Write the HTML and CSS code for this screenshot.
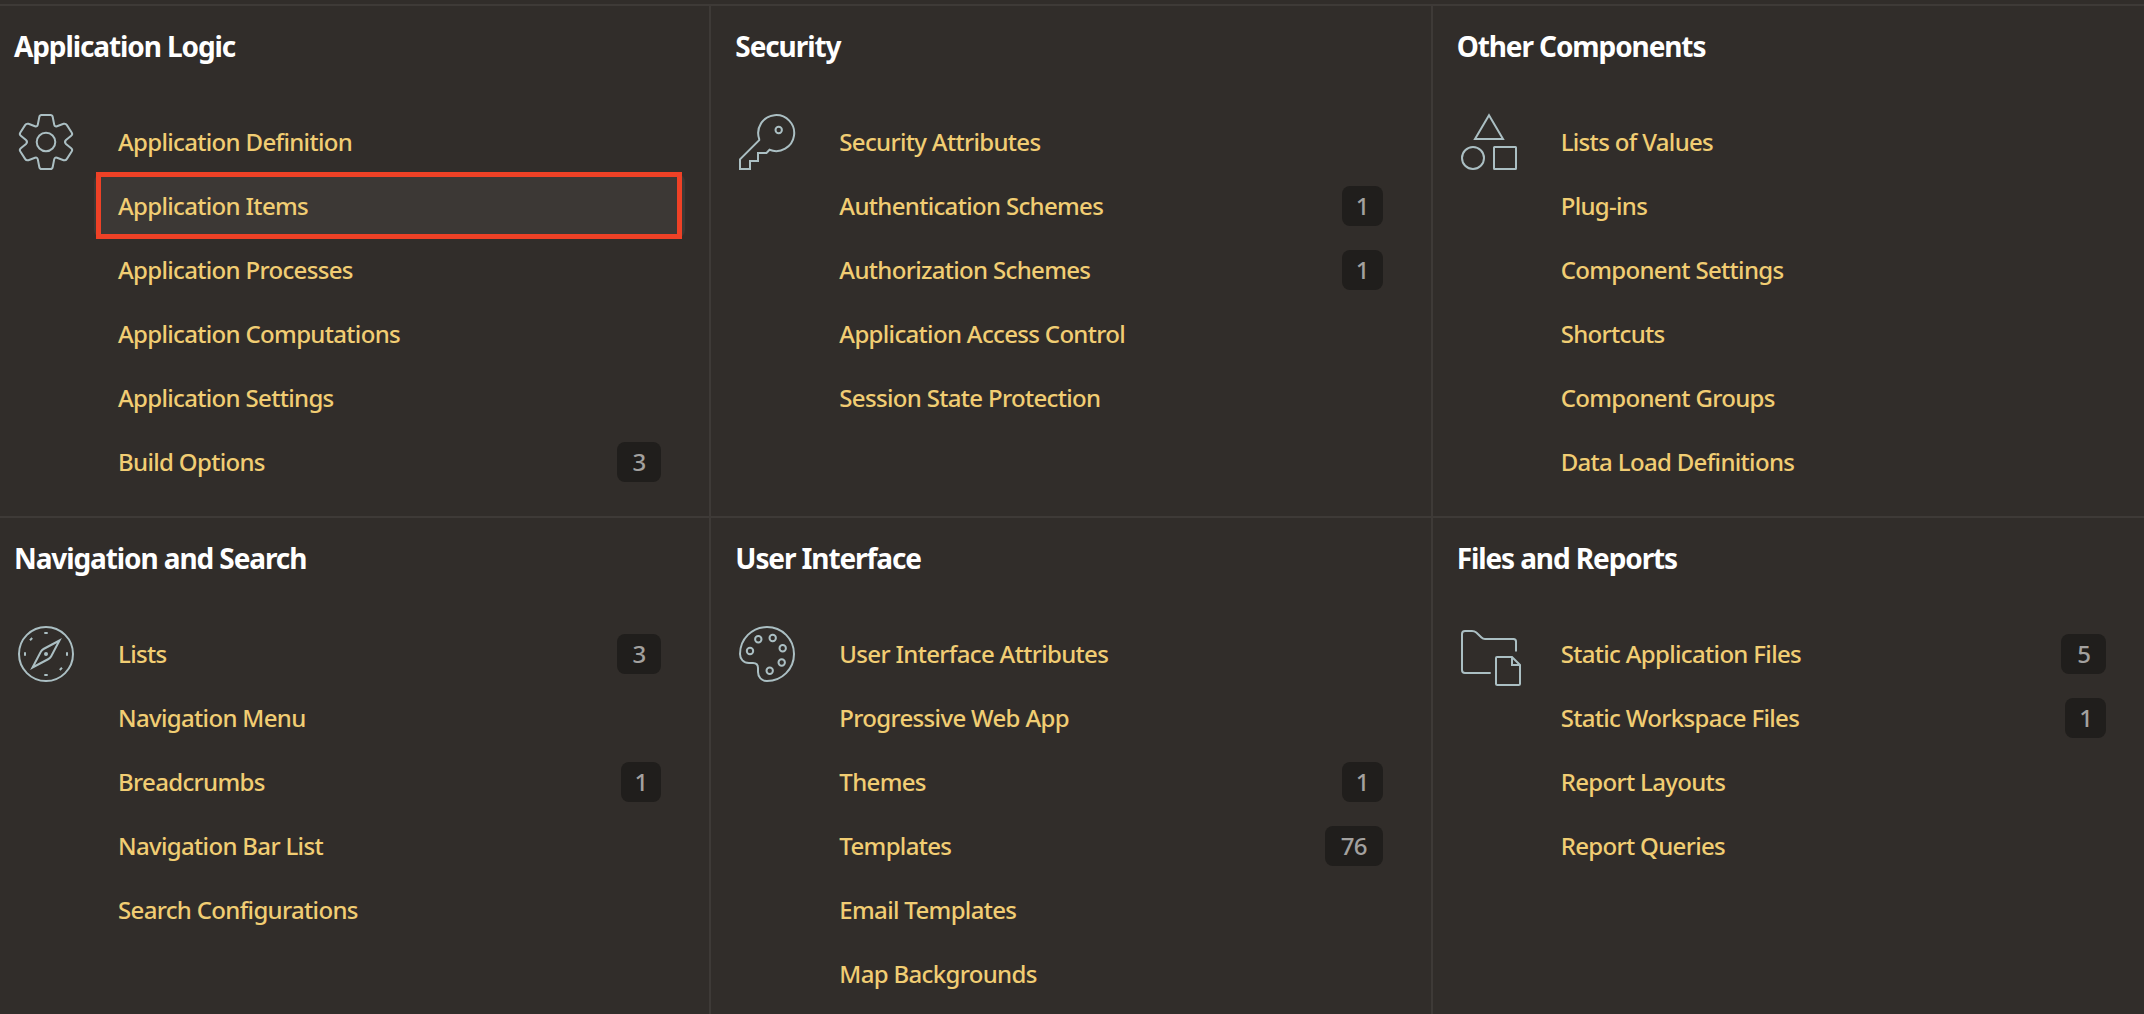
FILE: index.html
```html
<!DOCTYPE html>
<html lang="en">
<head>
<meta charset="utf-8">
<title>Shared Components</title>
<link rel="stylesheet" href="styles.css">
</head>
<body>
<main class="components">
  <section class="group">
    <h2 class="group-title">Application Logic</h2>
    <div class="group-body">
      <svg class="icon" viewBox="0 0 56 56"><path d="M21.3 3Q21.7 1 23.5 1H32.5Q34.3 1 34.7 3L36.2 10.6Q36.7 13 39 12.2L45.6 9.8Q47.7 9.2 48.9 11.1L53.8 18.7Q54.8 20.4 53.2 21.7L48 26Q46 28 48 30L53.2 34.3Q54.8 35.6 53.8 37.3L48.9 44.9Q47.7 46.8 45.6 46.2L39 43.8Q36.7 43 36.2 45.4L34.7 53Q34.3 55 32.5 55H23.5Q21.7 55 21.3 53L19.8 45.4Q19.3 43 17 43.8L10.4 46.2Q8.3 46.8 7.1 44.9L2.2 37.3Q1.2 35.6 2.8 34.3L8 30Q10 28 8 26L2.8 21.7Q1.2 20.4 2.2 18.7L7.1 11.1Q8.3 9.2 10.4 9.8L17 12.2Q19.3 13 19.8 10.6Z"/><circle cx="28" cy="28" r="9.3"/></svg>
      <ul class="links">
        <li><a class="link" href="#">Application Definition</a></li>
        <li><a class="link link-current" href="#">Application Items</a></li>
        <li><a class="link" href="#">Application Processes</a></li>
        <li><a class="link" href="#">Application Computations</a></li>
        <li><a class="link" href="#">Application Settings</a></li>
        <li><a class="link" href="#">Build Options<span class="badge">3</span></a></li>
      </ul>
    </div>
  </section>
  <section class="group">
    <h2 class="group-title">Security</h2>
    <div class="group-body">
      <svg class="icon" viewBox="0 0 56 56"><path d="M20.2 26.2V25A18 18 0 1 1 30.5 35.8L27.5 39H19V47H11V55H1V45.4Z"/><circle cx="39.7" cy="16" r="3.2"/></svg>
      <ul class="links">
        <li><a class="link" href="#">Security Attributes</a></li>
        <li><a class="link" href="#">Authentication Schemes<span class="badge badge-one">1</span></a></li>
        <li><a class="link" href="#">Authorization Schemes<span class="badge badge-one">1</span></a></li>
        <li><a class="link" href="#">Application Access Control</a></li>
        <li><a class="link" href="#">Session State Protection</a></li>
      </ul>
    </div>
  </section>
  <section class="group">
    <h2 class="group-title">Other Components</h2>
    <div class="group-body">
      <svg class="icon" viewBox="0 0 56 56"><path d="M28 1.2 42 25H14Z"/><circle cx="12" cy="44" r="11"/><rect x="33" y="33" width="22" height="22" rx=".5"/></svg>
      <ul class="links">
        <li><a class="link" href="#">Lists of Values</a></li>
        <li><a class="link" href="#">Plug-ins</a></li>
        <li><a class="link" href="#">Component Settings</a></li>
        <li><a class="link" href="#">Shortcuts</a></li>
        <li><a class="link" href="#">Component Groups</a></li>
        <li><a class="link" href="#">Data Load Definitions</a></li>
      </ul>
    </div>
  </section>
  <section class="group">
    <h2 class="group-title">Navigation and Search</h2>
    <div class="group-body">
      <svg class="icon" viewBox="0 0 56 56"><circle cx="28" cy="28" r="27"/><path d="M41.5 14.5 25.5 23Q23.7 24 22.8 25.8L14.5 41.5 30.5 33Q32.3 32 33.2 30.2ZM26.3 7H29.7M26.3 49H29.7M7 26.3V29.7M49 26.3V29.7M12 14.2 14.2 12M41.8 44 44 41.8"/><circle class="solid" cx="28" cy="28" r="2"/></svg>
      <ul class="links">
        <li><a class="link" href="#">Lists<span class="badge">3</span></a></li>
        <li><a class="link" href="#">Navigation Menu</a></li>
        <li><a class="link" href="#">Breadcrumbs<span class="badge badge-one">1</span></a></li>
        <li><a class="link" href="#">Navigation Bar List</a></li>
        <li><a class="link" href="#">Search Configurations</a></li>
      </ul>
    </div>
  </section>
  <section class="group">
    <h2 class="group-title">User Interface</h2>
    <div class="group-body">
      <svg class="icon" viewBox="0 0 56 56"><path d="M28 1C43 1 55 13 55 28S43 55 28 55C22.5 55 19 51 19 46V42C19 39 17 37 14 37H10C4.5 37 1 33 1 28C1 13 13 1 28 1Z"/><circle cx="19.3" cy="13.3" r="3.2"/><circle cx="33.7" cy="12" r="3.2"/><circle cx="43.7" cy="22.3" r="3.2"/><circle cx="42.7" cy="36.5" r="3.2"/><circle cx="30.7" cy="44.7" r="3.2"/><circle cx="11" cy="25" r="3.2"/></svg>
      <ul class="links">
        <li><a class="link" href="#">User Interface Attributes</a></li>
        <li><a class="link" href="#">Progressive Web App</a></li>
        <li><a class="link" href="#">Themes<span class="badge badge-one">1</span></a></li>
        <li><a class="link" href="#">Templates<span class="badge">76</span></a></li>
        <li><a class="link" href="#">Email Templates</a></li>
        <li><a class="link" href="#">Map Backgrounds</a></li>
      </ul>
    </div>
  </section>
  <section class="group">
    <h2 class="group-title">Files and Reports</h2>
    <div class="group-body">
      <svg class="icon" viewBox="0 0 56 56"><path d="M29.7 47H4Q1 47 1 44V8Q1 5 4 5H11Q13.5 5 15.3 6.5L20.5 11.5Q22 13 24 13H52.5Q55 13 55 15.5V25.5M36 31H51L59 39V57.5Q59 59 57.5 59H36.5Q35 59 35 57.5V32Q35 31 36 31ZM51 31V39H59"/></svg>
      <ul class="links">
        <li><a class="link" href="#">Static Application Files<span class="badge">5</span></a></li>
        <li><a class="link" href="#">Static Workspace Files<span class="badge badge-one">1</span></a></li>
        <li><a class="link" href="#">Report Layouts</a></li>
        <li><a class="link" href="#">Report Queries</a></li>
      </ul>
    </div>
  </section>
</main>
</body>
</html>
```
FILE: styles.css
```css
* {
  box-sizing: border-box;
}

body {
  margin: 0;
  height: 1014px;
  overflow: hidden;
  background: #312d2a;
  font-family: "Noto Sans", "Open Sans", sans-serif;
}

.components {
  display: grid;
  grid-template-columns: repeat(3, 1fr);
  grid-auto-rows: 512px;
  margin: 4px -10px 0;
}

.group {
  padding: 0 24px;
  border-top: 2px solid #3e3a37;
  border-right: 2px solid #3e3a37;
}

.group:nth-child(3n) {
  border-right: 0;
}

.group-title {
  margin: 0;
  padding-top: 20px;
  height: 104px;
  color: #fff;
  font-size: 28px;
  font-weight: 700;
  line-height: 40px;
  letter-spacing: -1.1px;
}

.group-body {
  display: flex;
  gap: 20px;
  padding-left: 4px;
}

.icon {
  flex: none;
  width: 56px;
  height: 56px;
  margin-top: 4px;
  overflow: visible;
  fill: none;
  stroke: #abbfc3;
  stroke-width: 2;
}

.icon .solid {
  fill: #abbfc3;
  stroke: none;
}

.links {
  flex: 1;
  margin: 0;
  padding: 0;
  list-style: none;
}

.link {
  position: relative;
  display: flex;
  align-items: center;
  justify-content: space-between;
  height: 64px;
  padding: 0 24px 2px;
  border-radius: 8px;
  color: #f1cd73;
  font-size: 24px;
  font-weight: 500;
  letter-spacing: -0.67px;
  text-decoration: none;
}

.link-current {
  background: #3c3835;
}

/* Callout frame laid over the highlighted row */
.link-current::after {
  content: "";
  position: absolute;
  inset: -2px 3.5px -1px 2px;
  border: 5px solid #ee4126;
}

.badge {
  height: 40px;
  margin-top: 2px;
  padding: 0 15.75px;
  border-radius: 8px;
  background: #201e1c;
  color: #a3a19f;
  line-height: 40px;
}

.badge-one {
  padding: 0 13.75px;
}
```
